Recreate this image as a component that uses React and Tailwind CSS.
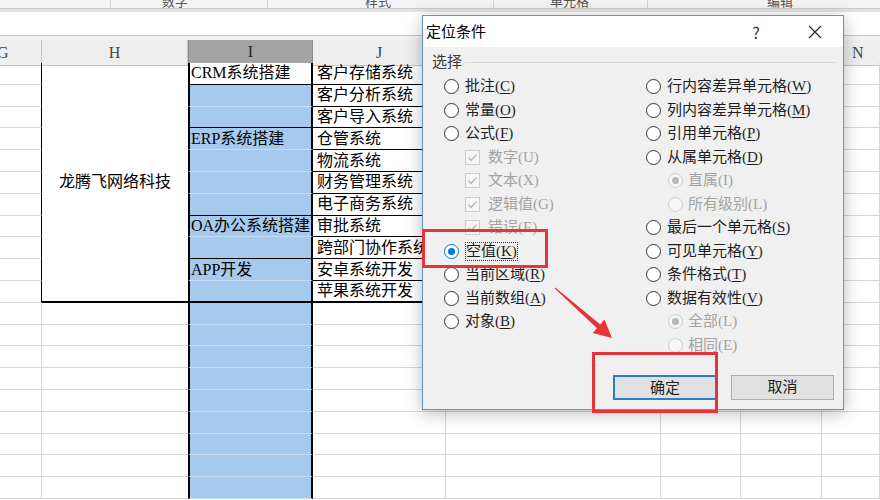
import clsx from "clsx";

const jItems = [
    "客户存储系统",
    "客户分析系统",
    "客户导入系统",
    "仓管系统",
    "物流系统",
    "财务管理系统",
    "电子商务系统",
    "审批系统",
    "跨部门协作系统",
    "安卓系统开发",
    "苹果系统开发",
];

const iLabels = { 0: "CRM系统搭建", 3: "ERP系统搭建", 7: "OA办公系统搭建", 9: "APP开发" };
const groupEnds = [2, 6, 8];

const leftOptions = [
    { type: "radio", t: "批注", k: "C" },
    { type: "radio", t: "常量", k: "O" },
    { type: "radio", t: "公式", k: "F" },
    { type: "check", t: "数字", k: "U" },
    { type: "check", t: "文本", k: "X" },
    { type: "check", t: "逻辑值", k: "G" },
    { type: "check", t: "错误", k: "E" },
    { type: "radio", t: "空值", k: "K", checked: true, focus: true },
    { type: "radio", t: "当前区域", k: "R" },
    { type: "radio", t: "当前数组", k: "A" },
    { type: "radio", t: "对象", k: "B" },
];

const rightOptions = [
    { t: "行内容差异单元格", k: "W" },
    { t: "列内容差异单元格", k: "M" },
    { t: "引用单元格", k: "P" },
    { t: "从属单元格", k: "D" },
    { t: "直属", k: "I", sub: true, checked: true },
    { t: "所有级别", k: "L", sub: true },
    { t: "最后一个单元格", k: "S" },
    { t: "可见单元格", k: "Y" },
    { t: "条件格式", k: "T" },
    { t: "数据有效性", k: "V" },
    { t: "全部", k: "L", sub: true, checked: true },
    { t: "相同", k: "E", sub: true },
];

const Radio = ({ checked, disabled }) => (
    <span
        className={clsx(
            "flex h-[15px] w-[15px] shrink-0 items-center justify-center rounded-full border",
            disabled ? "border-[#cccccc] bg-[#f6f6f6]" : checked ? "border-[#0078d7] bg-white" : "border-[#333333] bg-white"
        )}
    >
        {checked && <span className={clsx("h-[7px] w-[7px] rounded-full", disabled ? "bg-[#b8b8b8]" : "bg-[#0078d7]")} />}
    </span>
);

const CheckBox = () => (
    <span className="flex h-[15px] w-[15px] shrink-0 items-center justify-center border border-[#cccccc] bg-[#f6f6f6]">
        <svg width="11" height="11" viewBox="0 0 11 11">
            <path d="M1.5 5.8 L4.2 8.4 L9.5 2.6" fill="none" stroke="#b0b0b0" strokeWidth="1.2" />
        </svg>
    </span>
);

const OptionLabel = ({ t, k, disabled, focus }) => (
    <span
        className={clsx(
            "whitespace-nowrap text-[15px] leading-[17px]",
            disabled ? "text-[#a3a3a3]" : "text-[#1f1f1f]",
            focus && "border border-dotted border-[#333333]"
        )}
    >
        {t}(
        {disabled ? k : <span className="underline underline-offset-2">{k}</span>})
    </span>
);

const gridCols = "grid grid-cols-[42px_146px_125px_133px_215px_80px_81px_58px]";

const App = () => {
    const rows = Array.from({ length: 20 }, (_, r) => r);

    const cells = rows.flatMap((r) => {
        const inTable = r < 11;
        const out = [];

        out.push(
            <div
                key={`g${r}`}
                className={
                    inTable
                        ? "border-b border-r border-b-[#d6d6d6] border-r-black"
                        : "border-b border-r border-b-[#d6d6d6] border-r-[#d6d6d6]"
                }
            />
        );

        if (r === 0) {
            out.push(
                <div key="h-merged" className="row-span-11 flex items-center justify-center border-b-2 border-b-black text-[16px]">
                    龙腾飞网络科技
                </div>
            );
        }
        if (r >= 11) out.push(<div key={`h${r}`} className="border-b border-b-[#d6d6d6]" />);

        let iCls = "bg-[#a6caee] border-x-2 border-x-black border-b border-b-[#c8ddf3]";
        if (r === 0) iCls = "bg-white border-x-2 border-x-black border-b border-b-black";
        else if (r === 10) iCls = "bg-[#a6caee] border-x-2 border-x-black border-b-2 border-b-black";
        else if (groupEnds.includes(r)) iCls = "bg-[#a6caee] border-x-2 border-x-black border-b border-b-black";
        out.push(
            <div key={`i${r}`} className={clsx("flex items-center overflow-hidden whitespace-nowrap pl-[1px] text-[16px]", iCls)}>
                {iLabels[r]}
            </div>
        );

        let jCls = "border-b border-r border-[#d6d6d6]";
        if (r < 10) jCls = "border-b border-r border-black";
        if (r === 10) jCls = "border-b-2 border-r border-black";
        out.push(
            <div key={`j${r}`} className={clsx("flex items-center overflow-hidden whitespace-nowrap pl-[4px] text-[16px]", jCls)}>
                {jItems[r]}
            </div>
        );

        ["k", "l", "m", "n"].forEach((c) => {
            out.push(<div key={`${c}${r}`} className="border-b border-r border-[#d6d6d6]" />);
        });

        return out;
    });

    return (
        <div className="relative h-[500px] w-[880px] overflow-hidden bg-white font-['Liberation_Serif','Noto_Sans_CJK_SC',serif] text-black">
            {/* ribbon group labels, cut off at the top */}
            <div className="flex h-[9px] overflow-hidden border-b border-[#c9c9c9] bg-[#f3f3f3] font-['Noto_Sans_CJK_SC',sans-serif] text-[13px] leading-[13px] text-[#555555]">
                <div className="w-[110px]" />
                <div className="w-[157px] border-l border-[#d3d3d3] pl-[51px]">
                    <span className="-mt-[6px] block">数字</span>
                </div>
                <div className="w-[226px] border-l border-[#d3d3d3] pl-[97px]">
                    <span className="-mt-[6px] block">样式</span>
                </div>
                <div className="w-[154px] border-l border-[#d3d3d3] pl-[56px]">
                    <span className="-mt-[6px] block">单元格</span>
                </div>
                <div className="flex-1 border-l border-[#d3d3d3] pl-[119px]">
                    <span className="-mt-[6px] block">编辑</span>
                </div>
            </div>
            <div className="h-[3px] bg-[#e2e2e2]" />
            <div className="h-[24px] border-b border-[#c4c4c4] bg-white" />
            <div className="h-[4px] bg-[#f2f2f2]" />

            {/* column headers */}
            <div className={clsx(gridCols, "h-[23px] text-[16px] text-[#444444]")}>
                <div className="flex items-center overflow-hidden border-b border-r border-[#c6c6c6] bg-[#eeeeee]">
                    <span className="-ml-[3px]">G</span>
                </div>
                <div className="flex items-center justify-center border-b border-r border-[#c6c6c6] bg-[#eeeeee]">H</div>
                <div className="flex items-center justify-center border-b-2 border-x border-b-black border-x-[#8a8a8a] bg-[#a4a4a4] text-[#222222]">
                    I
                </div>
                <div className="flex items-center justify-center border-b border-r border-[#c6c6c6] bg-[#eeeeee]">J</div>
                <div className="flex items-center justify-center border-b border-r border-[#c6c6c6] bg-[#eeeeee]">K</div>
                <div className="flex items-center justify-center border-b border-r border-[#c6c6c6] bg-[#eeeeee]">L</div>
                <div className="flex items-center justify-center border-b border-r border-[#c6c6c6] bg-[#eeeeee]">M</div>
                <div className="flex items-center justify-start overflow-hidden border-b border-[#c6c6c6] bg-[#eeeeee] pl-[30px]">N</div>
            </div>

            {/* sheet body */}
            <div className={clsx(gridCols, "auto-rows-[21.8px]")}>{cells}</div>

            {/* 定位条件 dialog */}
            <div className="absolute left-[422px] top-[15px] flex h-[395px] w-[422px] flex-col border border-[#5b97c4] bg-[#f0f0f0] shadow-[0_3px_16px_rgba(0,0,0,0.28)]">
                <div className="flex h-[31px] items-center bg-white pl-[3px] font-['Noto_Sans_CJK_SC',sans-serif] text-[15px] text-black">
                    <span>定位条件</span>
                    <div className="ml-auto flex items-center gap-[13px] pr-[5px]">
                        <span className="w-[46px] text-center text-[16px] text-[#333333]">?</span>
                        <span className="flex w-[46px] justify-center">
                            <svg width="14" height="14" viewBox="0 0 14 14">
                                <path d="M1 1 L13 13 M13 1 L1 13" stroke="#222222" strokeWidth="1.1" />
                            </svg>
                        </span>
                    </div>
                </div>

                <div className="mt-[5px] flex h-[20px] items-center pl-[9px]">
                    <span className="text-[15px] text-[#3a3a3a]">选择</span>
                    <div className="ml-[3px] mr-[7px] h-px flex-1 bg-[#d9d9d9]" />
                </div>

                <div className="mt-[3px] flex pl-[21px]">
                    <div className="w-[202px]">
                        {leftOptions.map((o) => (
                            <div key={o.t} className={clsx("flex h-[23.5px] items-center", o.type === "check" ? "gap-[8px] pl-[21px]" : "gap-[6px]")}>
                                {o.type === "check" ? <CheckBox /> : <Radio checked={o.checked} />}
                                <OptionLabel t={o.t} k={o.k} disabled={o.type === "check"} focus={o.focus} />
                            </div>
                        ))}
                    </div>
                    <div>
                        {rightOptions.map((o) => (
                            <div key={o.t} className={clsx("flex h-[23.5px] items-center", o.sub ? "gap-[5px] pl-[22px]" : "gap-[6px]")}>
                                <Radio checked={o.checked} disabled={o.sub} />
                                <OptionLabel t={o.t} k={o.k} disabled={o.sub} />
                            </div>
                        ))}
                    </div>
                </div>

                <div className="mt-[18px] flex justify-end gap-[14px] pr-[9px] text-[15px] text-[#222222]">
                    <button className="h-[25px] w-[104px] border-2 border-[#2f7ccc] bg-[#e1e1e1]">确定</button>
                    <button className="h-[25px] w-[103px] border border-[#adadad] bg-[#e1e1e1]">取消</button>
                </div>
            </div>

            {/* red annotations */}
            <div className="absolute left-[422px] top-[229px] h-[39px] w-[126px] border-[3px] border-[#e5343a]" />
            <div className="absolute left-[592px] top-[352px] h-[61px] w-[126px] border-[3px] border-[#e5343a]" />
            <svg className="pointer-events-none absolute left-0 top-0" width="880" height="500" viewBox="0 0 880 500">
                <polygon
                    points="554.7,288.4 555.3,287.6 600.3,324.4 604.5,319.5 612,338 592.7,333.1 597,328.2"
                    fill="#e5343a"
                />
            </svg>
        </div>
    );
};

export default App;
